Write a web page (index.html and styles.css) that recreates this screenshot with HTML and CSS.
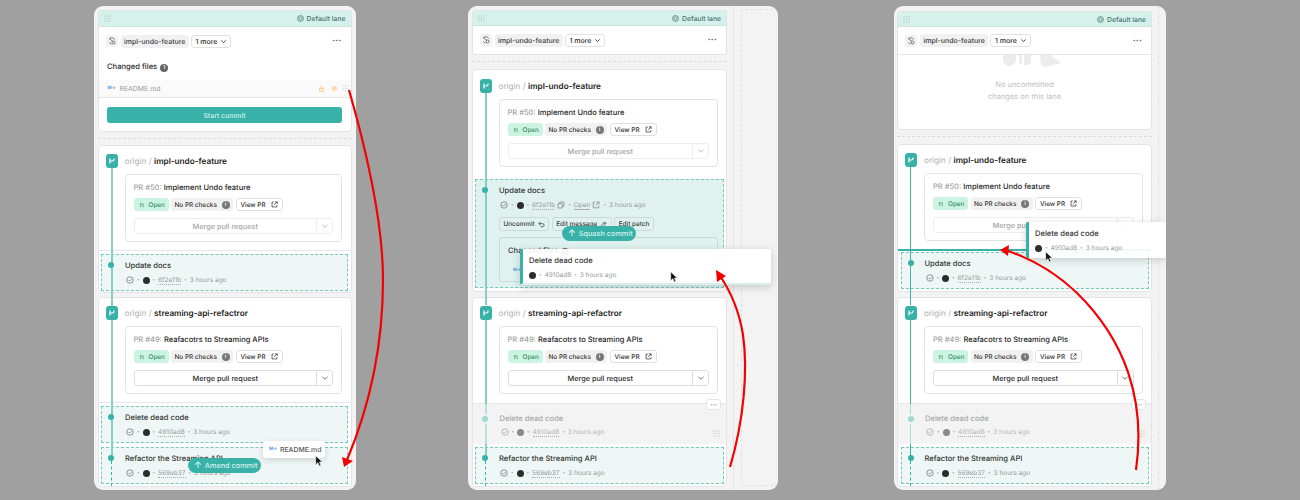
FILE: index.html
```html
<!DOCTYPE html>
<html lang="en">
<head>
    <meta charset="UTF-8">
    <title>Lanes</title>
    <link rel="stylesheet" href="styles.css">
</head>
<body>
<svg class="defs" width="0" height="0">
    <symbol id="i-drag" viewBox="0 0 7 7"><g fill="currentColor"><circle cx="1" cy="1" r=".7"/><circle cx="3.5" cy="1" r=".7"/><circle cx="6" cy="1" r=".7"/><circle cx="1" cy="3.5" r=".7"/><circle cx="3.5" cy="3.5" r=".7"/><circle cx="6" cy="3.5" r=".7"/><circle cx="1" cy="6" r=".7"/><circle cx="3.5" cy="6" r=".7"/><circle cx="6" cy="6" r=".7"/></g></symbol>
    <symbol id="i-target" viewBox="0 0 8 8"><g fill="none" stroke="currentColor" stroke-width=".8"><circle cx="4" cy="4" r="3.4"/><circle cx="4" cy="4" r="1.7"/></g></symbol>
    <symbol id="i-stack" viewBox="0 0 8 8"><g fill="none" stroke="currentColor" stroke-width=".8"><path d="M6.6 2.6A3 3 0 0 0 1.4 2"/><path d="M1.2 1.2L3 3l1.8 1.4"/><circle cx="5.5" cy="5.5" r="1.5"/><path d="M1.4 5.4a3 3 0 0 0 2 1.6"/></g></symbol>
    <symbol id="i-chev" viewBox="0 0 8 8"><path d="M1.5 2.8L4 5.2l2.5-2.4" fill="none" stroke="currentColor" stroke-width="1"/></symbol>
    <symbol id="i-branch" viewBox="0 0 12 14"><path d="M4 4.5v5M4 7h2.5q1.5 0 1.5-1.5V4.5" fill="none" stroke="#fff" stroke-width="1.2"/></symbol>
    <symbol id="i-pr" viewBox="0 0 8 8"><path d="M2 7V3M.8 4L2 2.8 3.2 4M4.8 7V4q0-1.4-1.2-1.4" fill="none" stroke="currentColor" stroke-width=".8"/></symbol>
    <symbol id="i-ext" viewBox="0 0 8 8"><path d="M3.2 1.2H1.2v5.6h5.6V4.8M4.4 1h2.6v2.6M7 1L3.6 4.4" fill="none" stroke="currentColor" stroke-width=".8"/></symbol>
    <symbol id="i-copy" viewBox="0 0 8 8"><path d="M2.8 2.6V1h4.2v4.2H5.4M1 2.8h4.2V7H1z" fill="none" stroke="currentColor" stroke-width=".8"/></symbol>
    <symbol id="i-undo" viewBox="0 0 8 8"><path d="M3 1L1 3l2 2M1 3h4.2a1.8 1.8 0 0 1 0 3.6H3" fill="none" stroke="currentColor" stroke-width=".8"/></symbol>
    <symbol id="i-pen" viewBox="0 0 8 8"><path d="M1 7l.5-2L5.4 1.1l1.5 1.5L3 6.5zM4.6 2l1.5 1.5" fill="none" stroke="currentColor" stroke-width=".8"/></symbol>
    <symbol id="i-check" viewBox="0 0 8 8"><g fill="none" stroke="currentColor" stroke-width=".8"><circle cx="4" cy="4" r="3.2"/><path d="M2.5 4l1.1 1.1 2-2"/></g></symbol>
    <symbol id="i-cursor" viewBox="0 0 8 12"><path d="M.7.7v9l2.2-2 1.4 3.2 1.6-.7L4.5 7.1h2.8z" fill="#111" stroke="#fff" stroke-width=".6"/></symbol>
</svg>

<div class="stage">

    <!-- first window: amend -->
    <section class="window window-a">
        <div class="column">
            <div class="lane lane-tall">
                <div class="lane-bar">
                    <svg class="drag"><use href="#i-drag"/></svg>
                    <span class="lane-name"><svg class="ico"><use href="#i-target"/></svg>Default lane</span>
                </div>
                <div class="lane-head">
                    <span class="stack-ico"><svg class="ico"><use href="#i-stack"/></svg></span>
                    <span class="pill">impl-undo-feature</span>
                    <span class="more">1 more<svg class="ico"><use href="#i-chev"/></svg></span>
                    <span class="dots">•••</span>
                </div>
                <div class="changed">Changed files <span class="count">1</span></div>
                <div class="file-row">
                    <span class="md">M↓</span><span class="file-name">README.md</span>
                    <svg class="lock" viewBox="0 0 6 7"><path d="M1.5 3V2a1.5 1.5 0 0 1 3 0v1M.7 3h4.6v3.4H.7z" fill="none" stroke="currentColor" stroke-width=".8"/></svg>
                    <span class="mod-dot"></span>
                    <svg class="drag drag-file"><use href="#i-drag"/></svg>
                </div>
                <button class="start">Start commit</button>
            </div>
            <div class="sep"></div>

            <div class="branch">
                <span class="rail"></span>
                <div class="branch-head">
                    <span class="branch-ico"><svg><use href="#i-branch"/></svg></span>
                    <span><span class="origin">origin /</span> <b>impl-undo-feature</b></span>
                </div>
                <div class="pr">
                    <div class="pr-title"><span class="pr-num">PR #50:</span> Implement Undo feature</div>
                    <div class="chips">
                        <span class="chip chip-open"><svg class="ico"><use href="#i-pr"/></svg>Open</span>
                        <span class="chip chip-gray">No PR checks <span class="info">i</span></span>
                        <span class="chip chip-view">View PR<svg class="ico"><use href="#i-ext"/></svg></span>
                    </div>
                    <div class="merge merge-off"><span class="merge-main">Merge pull request</span><span class="merge-more"><svg class="ico"><use href="#i-chev"/></svg></span></div>
                </div>
                <div class="rule"></div>
                <div class="commit">
                    <span class="dot"></span>
                    <div class="commit-title">Update docs</div>
                    <div class="meta"><svg class="ico"><use href="#i-check"/></svg><i>•</i><span class="avatar"></span><i>•</i><span class="hash">6f2e11b</span><i>•</i>3 hours ago</div>
                </div>
            </div>

            <div class="branch branch-last">
                <span class="rail"></span>
                <div class="branch-head">
                    <span class="branch-ico"><svg><use href="#i-branch"/></svg></span>
                    <span><span class="origin">origin /</span> <b>streaming-api-refactror</b></span>
                </div>
                <div class="pr">
                    <div class="pr-title"><span class="pr-num">PR #49:</span> Reafacotrs to Streaming APIs</div>
                    <div class="chips">
                        <span class="chip chip-open"><svg class="ico"><use href="#i-pr"/></svg>Open</span>
                        <span class="chip chip-gray">No PR checks <span class="info">i</span></span>
                        <span class="chip chip-view">View PR<svg class="ico"><use href="#i-ext"/></svg></span>
                    </div>
                    <div class="merge"><span class="merge-main">Merge pull request</span><span class="merge-more"><svg class="ico"><use href="#i-chev"/></svg></span></div>
                </div>
                <div class="rule"></div>
                <div class="commit">
                    <span class="dot"></span>
                    <div class="commit-title">Delete dead code</div>
                    <div class="meta"><svg class="ico"><use href="#i-check"/></svg><i>•</i><span class="avatar"></span><i>•</i><span class="hash">4910ad8</span><i>•</i>3 hours ago</div>
                </div>
                <div class="commit commit-next">
                    <span class="dot"></span>
                    <span class="tail"></span>
                    <div class="commit-title">Refactor the Streaming API</div>
                    <div class="meta"><svg class="ico"><use href="#i-check"/></svg><i>•</i><span class="avatar"></span><i>•</i><span class="hash">569eb37</span><i>•</i>3 hours ago</div>
                </div>
            </div>
        </div>
        <div class="drop-pill amend-pill"><span class="up">↑</span>Amend commit</div>
        <div class="file-ghost"><span class="md">M↓</span>README.md</div>
        <svg class="cursor cursor-a"><use href="#i-cursor"/></svg>
    </section>

    <!-- second window: squash -->
    <section class="window window-b">
        <div class="column">
            <div class="lane">
                <div class="lane-bar">
                    <svg class="drag"><use href="#i-drag"/></svg>
                    <span class="lane-name"><svg class="ico"><use href="#i-target"/></svg>Default lane</span>
                </div>
                <div class="lane-head">
                    <span class="stack-ico"><svg class="ico"><use href="#i-stack"/></svg></span>
                    <span class="pill">impl-undo-feature</span>
                    <span class="more">1 more<svg class="ico"><use href="#i-chev"/></svg></span>
                    <span class="dots">•••</span>
                </div>
            </div>
            <div class="sep"></div>

            <div class="branch branch-open">
                <span class="rail"></span>
                <div class="branch-head">
                    <span class="branch-ico"><svg><use href="#i-branch"/></svg></span>
                    <span><span class="origin">origin /</span> <b>impl-undo-feature</b></span>
                </div>
                <div class="pr">
                    <div class="pr-title"><span class="pr-num">PR #50:</span> Implement Undo feature</div>
                    <div class="chips">
                        <span class="chip chip-open"><svg class="ico"><use href="#i-pr"/></svg>Open</span>
                        <span class="chip chip-gray">No PR checks <span class="info">i</span></span>
                        <span class="chip chip-view">View PR<svg class="ico"><use href="#i-ext"/></svg></span>
                    </div>
                    <div class="merge merge-off"><span class="merge-main">Merge pull request</span><span class="merge-more"><svg class="ico"><use href="#i-chev"/></svg></span></div>
                </div>
                <div class="commit commit-open">
                    <span class="dot"></span>
                    <div class="commit-title">Update docs</div>
                    <div class="meta"><svg class="ico"><use href="#i-check"/></svg><i>•</i><span class="avatar"></span><i>•</i><span class="hash">6f2e11b</span><svg class="ico ico-after"><use href="#i-copy"/></svg><i>•</i><span class="link">Open</span><svg class="ico ico-after"><use href="#i-ext"/></svg><i>•</i>3 hours ago</div>
                    <div class="actions">
                        <span class="action">Uncommit<svg class="ico"><use href="#i-undo"/></svg></span>
                        <span class="action">Edit message<svg class="ico"><use href="#i-pen"/></svg></span>
                        <span class="action">Edit patch</span>
                    </div>
                    <div class="files-box">
                        <div class="files-title">Changed files <span class="count">1</span></div>
                        <div class="files-line"><span class="md">M↓</span><span class="file-name">README.md</span></div>
                    </div>
                </div>
            </div>

            <div class="branch branch-last branch-moved">
                <span class="rail"></span>
                <div class="branch-head">
                    <span class="branch-ico"><svg><use href="#i-branch"/></svg></span>
                    <span><span class="origin">origin /</span> <b>streaming-api-refactror</b></span>
                </div>
                <div class="pr">
                    <div class="pr-title"><span class="pr-num">PR #49:</span> Reafacotrs to Streaming APIs</div>
                    <div class="chips">
                        <span class="chip chip-open"><svg class="ico"><use href="#i-pr"/></svg>Open</span>
                        <span class="chip chip-gray">No PR checks <span class="info">i</span></span>
                        <span class="chip chip-view">View PR<svg class="ico"><use href="#i-ext"/></svg></span>
                    </div>
                    <div class="merge"><span class="merge-main">Merge pull request</span><span class="merge-more"><svg class="ico"><use href="#i-chev"/></svg></span></div>
                </div>
                <div class="commit commit-dim">
                    <span class="dot"></span>
                    <span class="row-menu">•••</span>
                    <svg class="drag drag-row"><use href="#i-drag"/></svg>
                    <div class="commit-title">Delete dead code</div>
                    <div class="meta"><svg class="ico"><use href="#i-check"/></svg><i>•</i><span class="avatar"></span><i>•</i><span class="hash">4910ad8</span><i>•</i>3 hours ago</div>
                </div>
                <div class="commit commit-next">
                    <span class="dot"></span>
                    <span class="tail"></span>
                    <div class="commit-title">Refactor the Streaming API</div>
                    <div class="meta"><svg class="ico"><use href="#i-check"/></svg><i>•</i><span class="avatar"></span><i>•</i><span class="hash">569eb37</span><i>•</i>3 hours ago</div>
                </div>
            </div>
        </div>
        <div class="empty-side"><div class="side-drop"></div></div>
        <div class="drop-pill squash-pill"><span class="up">↑</span>Squash commit</div>
        <div class="ghost ghost-b">
            <div class="commit-title">Delete dead code</div>
            <div class="meta"><span class="avatar"></span><i>•</i>4910ad8<i>•</i>3 hours ago</div>
        </div>
        <svg class="cursor cursor-b"><use href="#i-cursor"/></svg>
    </section>

    <!-- third window: reorder -->
    <section class="window window-c">
        <div class="column">
            <div class="lane lane-empty">
                <div class="lane-bar">
                    <svg class="drag"><use href="#i-drag"/></svg>
                    <span class="lane-name"><svg class="ico"><use href="#i-target"/></svg>Default lane</span>
                </div>
                <div class="lane-head lane-head-ruled">
                    <span class="stack-ico"><svg class="ico"><use href="#i-stack"/></svg></span>
                    <span class="pill">impl-undo-feature</span>
                    <span class="more">1 more<svg class="ico"><use href="#i-chev"/></svg></span>
                    <span class="dots">•••</span>
                </div>
                <svg class="art" viewBox="0 0 58 12"><path d="M0 0h13v6q-2 5-8 5Q1 11 0 5zM16 0h3v9h-3zM21 0h7v7q-2 4-7 3zM37 0h10l11 8-15 4-5-2z" fill="#ececec"/></svg>
                <p class="empty-text">No uncommitted<br>changes on this lane</p>
            </div>
            <div class="sep"></div>

            <div class="branch">
                <span class="rail"></span>
                <div class="branch-head">
                    <span class="branch-ico"><svg><use href="#i-branch"/></svg></span>
                    <span><span class="origin">origin /</span> <b>impl-undo-feature</b></span>
                </div>
                <div class="pr">
                    <div class="pr-title"><span class="pr-num">PR #50:</span> Implement Undo feature</div>
                    <div class="chips">
                        <span class="chip chip-open"><svg class="ico"><use href="#i-pr"/></svg>Open</span>
                        <span class="chip chip-gray">No PR checks <span class="info">i</span></span>
                        <span class="chip chip-view">View PR<svg class="ico"><use href="#i-ext"/></svg></span>
                    </div>
                    <div class="merge merge-off"><span class="merge-main">Merge pull request</span><span class="merge-more"><svg class="ico"><use href="#i-chev"/></svg></span></div>
                </div>
                <div class="rule rule-drop"></div>
                <div class="commit commit-after-drop">
                    <span class="dot"></span>
                    <div class="commit-title">Update docs</div>
                    <div class="meta"><svg class="ico"><use href="#i-check"/></svg><i>•</i><span class="avatar"></span><i>•</i><span class="hash">6f2e11b</span><i>•</i>3 hours ago</div>
                </div>
            </div>

            <div class="branch branch-last branch-moved">
                <span class="rail"></span>
                <div class="branch-head">
                    <span class="branch-ico"><svg><use href="#i-branch"/></svg></span>
                    <span><span class="origin">origin /</span> <b>streaming-api-refactror</b></span>
                </div>
                <div class="pr">
                    <div class="pr-title"><span class="pr-num">PR #49:</span> Reafacotrs to Streaming APIs</div>
                    <div class="chips">
                        <span class="chip chip-open"><svg class="ico"><use href="#i-pr"/></svg>Open</span>
                        <span class="chip chip-gray">No PR checks <span class="info">i</span></span>
                        <span class="chip chip-view">View PR<svg class="ico"><use href="#i-ext"/></svg></span>
                    </div>
                    <div class="merge"><span class="merge-main">Merge pull request</span><span class="merge-more"><svg class="ico"><use href="#i-chev"/></svg></span></div>
                </div>
                <div class="commit commit-dim">
                    <span class="dot"></span>
                    <span class="row-menu">•••</span>
                    <svg class="drag drag-row"><use href="#i-drag"/></svg>
                    <div class="commit-title">Delete dead code</div>
                    <div class="meta"><svg class="ico"><use href="#i-check"/></svg><i>•</i><span class="avatar"></span><i>•</i><span class="hash">4910ad8</span><i>•</i>3 hours ago</div>
                </div>
                <div class="commit commit-next">
                    <span class="dot"></span>
                    <span class="tail"></span>
                    <div class="commit-title">Refactor the Streaming API</div>
                    <div class="meta"><svg class="ico"><use href="#i-check"/></svg><i>•</i><span class="avatar"></span><i>•</i><span class="hash">569eb37</span><i>•</i>3 hours ago</div>
                </div>
            </div>
        </div>
        <div class="edge-strip"></div>
        <div class="ghost ghost-c">
            <div class="commit-title">Delete dead code</div>
            <div class="meta"><span class="avatar"></span><i>•</i>4910ad8<i>•</i>3 hours ago</div>
        </div>
        <svg class="cursor cursor-c"><use href="#i-cursor"/></svg>
    </section>

    <!-- red annotation arrows -->
    <svg class="arrows" width="1300" height="500" viewBox="0 0 1300 500">
        <g fill="none" stroke="#f40000" stroke-width="2.2">
            <path d="M349 90C372 170 383 230 383 280C383 350 368 410 347 460"/>
            <path d="M730 467C744 420 748 370 743 335C739 310 731 292 720 276"/>
            <path d="M1136 470C1146 400 1125 340 1077 293C1055 272 1030 258 1005 250"/>
        </g>
        <g fill="#f40000">
            <path d="M344 467L342 457L353 461z"/>
            <path d="M716 270L717 282L726 276z"/>
            <path d="M1000 250L1009 245L1008 256z"/>
        </g>
    </svg>
</div>
</body>
</html>
```
FILE: styles.css
```css
* { box-sizing: border-box; }
html, body { margin: 0; height: 500px; overflow: hidden; }
body { background: #a0a0a0; font-family: Inter, "Liberation Sans", sans-serif; font-size: 7.3px; color: #2b2b2b; text-rendering: geometricPrecision; }
.defs { position: absolute; }

.stage { position: relative; display: flex; height: 500px; padding: 6px 0 0 94px; }

.window { position: relative; display: flex; height: 484px; background: #f3f3f3; border-radius: 9px; overflow: hidden; flex: none; }
.window-a { width: 262px; padding: 5px 5.5px 0 4.5px; margin-right: 112px; }
.window-b { width: 310px; padding: 5px 0 0 4.5px; margin-right: 116px; }
.window-c { width: 272px; padding: 6px 0 0 4px; }
.window-a .column { width: 252px; }
.window-b .column { width: 253.5px; flex: none; }
.window-c .column { width: 253px; flex: none; }

.empty-side { flex: 1; margin: -5px 0 0 7px; border-left: 1px solid #e4e4e4; padding: 3px 0 4px 7px; }
.side-drop { height: 100%; border: 1px dashed #e0e0e0; border-right: 0; border-radius: 4px 0 0 4px; }
.edge-strip { position: absolute; top: 0; bottom: 0; left: 264px; border-left: 1px dashed #e2e2e2; }

/* lane header card */
.lane { background: #fff; box-shadow: 0 0 0 1px #e4e4e4; border-radius: 2px; }
.lane-tall { height: 120px; border-radius: 2px 2px 4px 4px; }
.lane-empty { position: relative; height: 117px; border-radius: 2px 2px 4px 4px; }
.lane-bar { display: flex; align-items: center; justify-content: space-between; height: 15px; padding: 0 5px; background: #d5f1ec; border-bottom: 1px solid #cbe6e1; }
.window-a .lane-bar { height: 16px; }
.drag { width: 7px; height: 7px; color: #b9c9c6; }
.lane-name { display: flex; align-items: center; gap: 3px; color: #44746d; font-size: 6.8px; font-weight: 500; }
.ico { width: 7px; height: 7px; flex: none; }
.lane-head { display: flex; align-items: center; height: 28px; padding: 0 9px 0 7px; }
.lane-head-ruled { border-bottom: 1px solid #e6e6e6; }
.stack-ico { display: flex; align-items: center; justify-content: center; width: 12px; height: 12px; margin-right: 3px; background: #f2f2f2; border-radius: 3px; color: #555; }
.stack-ico .ico { width: 8px; height: 8px; }
.pill { height: 13px; line-height: 13px; padding: 0 3.5px; background: #f1f1f1; border-radius: 3px; font-weight: 500; font-size: 7px; color: #3a3a3a; margin-right: 2px; }
.more { display: flex; align-items: center; gap: 3px; height: 13px; padding: 0 3px 0 3.5px; border: 1px solid #e2e2e2; border-radius: 3px; font-weight: 500; font-size: 7px; }
.dots { margin-left: auto; font-size: 5px; letter-spacing: .3px; color: #666; }

.changed { padding: 6px 8.5px 0; height: 25px; line-height: 12px; font-weight: 500; font-size: 7.6px; }
.count { display: inline-block; width: 8px; height: 8px; line-height: 8px; border-radius: 50%; background: #666; color: #fff; font-size: 5.5px; text-align: center; vertical-align: 0.5px; margin-left: 1px; }
.file-row { display: flex; align-items: center; height: 18px; padding: 0 2px 0 9px; background: #fafafa; border-bottom: 1px solid #e6e6e6; }
.md { color: #5a9ae0; font-size: 4.5px; font-weight: 700; width: 8px; margin-right: 4px; flex: none; }
.file-name { color: #9a9a9a; font-size: 6.9px; }
.lock { width: 5px; height: 6px; color: #f1b565; margin-left: auto; margin-right: 8px; }
.mod-dot { width: 5px; height: 5px; background: #fbdcae; border-radius: 50%; margin-right: 5px; }
.drag-file { color: #d8d8d8; }
.start { display: block; width: 235px; height: 16px; margin: 9px 0 0 8.5px; padding: 0; border: 0; border-radius: 3px; background: #38b2a8; color: #d6f1ed; font: 500 6.9px Inter, sans-serif; text-rendering: geometricPrecision; }

.sep { position: relative; height: 15px; margin: 0 -1px; }
.window-b .sep, .window-c .sep { height: 16px; }
.sep::after { content: ""; position: absolute; left: 0; right: 0; top: 7px; border-top: 1px dashed #dadada; }

/* branch cards */
.branch { position: relative; background: #fff; box-shadow: 0 0 0 1px #e4e4e4; border-radius: 4px; padding: 8px 0 2px; height: 146px; margin-bottom: 6px; }
.window-c .branch { margin-bottom: 7px; }
.branch-open { height: 221px; margin-bottom: 7px; padding-top: 9px; }
.branch-last { height: 188px; }
.rail { position: absolute; left: 12px; top: 22px; bottom: -14px; width: 2px; background: #85cfc7; z-index: 2; }
.branch-last .rail { bottom: 27px; }
.window-c .rail { width: 1.4px; background: #3fb3a8; }
.branch-head { display: flex; align-items: center; height: 14px; padding-left: 7px; font-size: 8.2px; margin-bottom: 6px; white-space: pre; }
.branch-ico { display: block; width: 12px; height: 14px; background: #38b2a8; border-radius: 3px; margin-right: 7px; position: relative; z-index: 3; }
.branch-ico svg { display: block; width: 12px; height: 14px; }
.origin { color: #b0b0b0; }
.branch-head b { font-weight: 600; color: #222; }

.pr { margin-left: 26px; margin-right: 8.5px; height: 68px; padding: 7px 8px 0; border: 1px solid #e3e3e3; border-radius: 4px; background: #fff; }
.window-b .pr { margin-right: 8px; }
.pr-title { height: 12px; line-height: 12px; font-weight: 500; color: #222; font-size: 7.5px; }
.pr-num { color: #a0a0a0; }
.chips { display: flex; gap: 2.5px; margin-top: 4px; height: 13px; }
.chip { display: flex; align-items: center; gap: 3px; height: 13px; padding: 0 3.5px; border-radius: 3px; font-weight: 500; font-size: 6.4px; }
.chip-open { background: #ccf4e2; color: #338a69; width: 35px; padding-left: 5px; }
.chip-gray { background: #f1f1f1; white-space: pre; color: #333; }
.chip-view { border: 1px solid #e0e0e0; gap: 5px; padding: 0 4px; }
.info { display: inline-block; width: 8px; height: 8px; line-height: 8px; background: #777; color: #fff; border-radius: 50%; font-size: 6px; text-align: center; }
.merge { display: flex; height: 16px; margin-top: 7px; border: 1px solid #dedede; border-radius: 3px; font-weight: 500; color: #2b2b2b; }
.merge-main { flex: 1; text-align: center; line-height: 15px; }
.merge-more { display: flex; align-items: center; justify-content: center; width: 16px; border-left: 1px solid #dedede; color: #777; }
.merge-more .ico { width: 8px; height: 8px; }
.merge-off { border-color: #eee; color: #a5a5a5; }
.merge-off .merge-more { border-color: #eee; color: #bbb; }

.rule { height: 1px; margin-top: 8px; margin-bottom: 3px; background: #e8e8e8; }
.rule-drop { position: relative; z-index: 3; height: 2px; margin-bottom: 1px; margin-top: 8px; background: #38b2a8; }

/* commit rows */
.commit { position: relative; height: 37px; margin: 0 2.5px; padding: 6px 0 0 24px; background: #eef7f5; outline: 1px dashed #74c9bf; outline-offset: -1px; }
.commit-next { margin-top: 4px; }
.commit-after-drop { padding-top: 6px; }
.commit-title { height: 12px; line-height: 12px; font-weight: 500; color: #333; font-size: 7.6px; }
.meta { display: flex; align-items: center; height: 12px; margin-top: 2px; font-size: 6.5px; color: #9a9a9a; margin-left: 1px; white-space: nowrap; }
.meta i { font-style: normal; font-size: 4.5px; margin: 0 3px; color: #aaa; }
.meta .ico { width: 8px; height: 8px; color: #777; }
.meta .ico-after { margin-left: 2px; color: #888; }
.avatar { width: 7px; height: 7px; background: #2c2c2c; border-radius: 50%; flex: none; }
.hash { border-bottom: 1px dotted #aaa; line-height: 8px; }
.link { border-bottom: 1px solid #aaa; line-height: 8px; }
.dot { position: absolute; left: 7px; top: 8px; width: 6px; height: 6px; background: #38b2a8; border-radius: 50%; z-index: 3; }
.tail { position: absolute; left: 9.5px; top: 14px; bottom: -2px; border-left: 1px dashed #38b2a8; z-index: 2; }

.commit-open { height: 109px; margin-top: 12px; background: #e0f2ef; padding-top: 6px; }
.actions { display: flex; gap: 2.5px; margin-top: 6px; }
.action { display: flex; align-items: center; gap: 3px; height: 14px; padding: 0 3.5px; border: 1px solid #c7dcd8; border-radius: 3px; font-weight: 500; font-size: 6.4px; color: #333; }
.files-box { width: 219px; height: 45px; margin-top: 6px; padding: 7px 8px; border: 1px solid #c7dcd8; border-radius: 3px; }
.files-title { font-weight: 500; height: 12px; line-height: 12px; color: #333; font-size: 7.6px; }
.files-line { display: flex; align-items: center; margin-top: 9px; padding-left: 5px; }

.branch-moved .pr { margin-bottom: 9px; }
.commit-dim { height: 41px; margin: 0; background: #f3f3f3; outline: 0; padding: 9px 0 0 27px; border-top: 1px solid #e8e8e8; }
.commit-dim::before { content: ""; position: absolute; left: 12px; top: 0; bottom: 0; width: 2px; background: #b9e0dc; z-index: 2; }
.commit-dim .dot { left: 9.5px; top: 11.5px; background: #9fd9d2; box-shadow: 0 0 0 2px #f3f3f3; }
.commit-dim .commit-title { color: #a8a8a8; }
.commit-dim .meta { color: #b5b5b5; margin-top: 1px; }
.commit-dim .meta .ico { color: #aaa; }
.commit-dim .avatar { background: #8a8a8a; }
.commit-dim + .commit-next { margin-top: 3px; }
.row-menu { position: absolute; right: 5px; top: -5px; width: 15px; height: 11px; line-height: 10px; text-align: center; font-size: 4px; color: #888; background: #fff; border: 1px solid #e4e4e4; border-radius: 3px; z-index: 3; }
.drag-row { position: absolute; right: 6px; bottom: 7px; color: #ccc; }
.window-c .commit-dim::before { width: 1.4px; background: #a8dcd6; }

/* things being dragged */
.drop-pill { position: absolute; display: flex; align-items: center; gap: 3px; height: 15px; padding: 0 6px; background: #38b2a8; color: #d6f1ed; border-radius: 8px; font-weight: 500; z-index: 5; white-space: nowrap; }
.up { font-size: 9px; line-height: 14px; }
.amend-pill { left: 94px; top: 452px; width: 73px; }
.squash-pill { left: 94px; top: 220px; width: 74px; }
.file-ghost { position: absolute; left: 169px; top: 435px; width: 62px; height: 17px; display: flex; align-items: center; padding-left: 6px; background: #fff; border-radius: 3px; box-shadow: 0 2px 6px rgba(0,0,0,.15); z-index: 6; color: #555; font-weight: 500; font-size: 6.9px; }
.file-ghost .md { margin-right: 3px; }
.ghost { position: absolute; height: 36px; padding: 6px 0 0 6px; background: rgba(255,255,255,.94); border-left: 3px solid #38b2a8; box-shadow: 0 2px 8px rgba(0,0,0,.18); z-index: 6; border-radius: 2px; }
.ghost .meta { margin-left: 0; margin-top: 2px; }
.ghost-b { left: 52px; top: 243px; width: 251px; border-bottom: 2px solid #d8eeeb; }
.ghost-c { left: 132px; top: 216px; width: 140px; }
.cursor { position: absolute; width: 8px; height: 12px; z-index: 7; }
.cursor-a { left: 221px; top: 449px; }
.cursor-b { left: 202px; top: 265px; }
.cursor-c { left: 151px; top: 245px; }

.art { position: absolute; left: 105px; top: 43px; width: 58px; height: 12px; }
.empty-text { position: absolute; left: 0; right: 0; top: 67px; margin: 0; text-align: center; line-height: 12px; color: #c0c0c0; font-size: 7.5px; }

.arrows { position: absolute; left: 0; top: 0; z-index: 10; pointer-events: none; }
```
